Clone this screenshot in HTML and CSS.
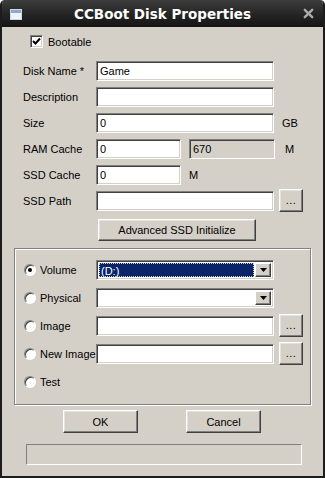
FILE: index.html
```html
<!DOCTYPE html>
<html>
<head>
<meta charset="utf-8">
<link rel="stylesheet" href="styles.css">
</head>
<body>
<div class="window">
  <div class="titlebar">
    <svg class="app-icon" width="12" height="11" viewBox="0 0 12 11"><rect x="0.5" y="0.5" width="11" height="10" fill="#eef3f9" stroke="#c9d6e6"/><rect x="1" y="1" width="10" height="3" fill="#8ea9c9"/></svg>
    <div class="title">CCBoot Disk Properties</div>
    <svg class="close" width="11" height="11" viewBox="0 0 11 11"><path d="M1.8 1.8 L9.2 9.2 M9.2 1.8 L1.8 9.2" stroke="#a9a9a9" stroke-width="2.4" stroke-linecap="round"/></svg>
  </div>
  <div class="client">
    <div class="check-row">
      <span class="checkbox"><svg width="9" height="9" viewBox="0 0 9 9"><path d="M1 4 L3.5 6.5 L8 1.5" fill="none" stroke="#000" stroke-width="2"/></svg></span>
      <span>Bootable</span>
    </div>
    <div class="fields">
      <div class="row"><span class="lbl">Disk Name *</span><div class="edit wide">Game</div></div>
      <div class="row"><span class="lbl">Description</span><div class="edit wide"></div></div>
      <div class="row"><span class="lbl">Size</span><div class="edit wide">0</div><span class="unit">GB</span></div>
      <div class="row"><span class="lbl">RAM Cache</span><div class="edit short">0</div><div class="edit disabled">670</div><span class="unit unit-m">M</span></div>
      <div class="row"><span class="lbl">SSD Cache</span><div class="edit short">0</div><span class="unit">M</span></div>
      <div class="row"><span class="lbl">SSD Path</span><div class="edit wide"></div><div class="btn browse">...</div></div>
    </div>
    <div class="adv-row"><div class="btn adv">Advanced SSD Initialize</div></div>
    <div class="group">
      <div class="grow"><span class="radio checked"></span><span class="rlbl">Volume</span>
        <div class="combo"><div class="combo-val"><span class="sel">(D:)</span></div><div class="drop"><svg width="7" height="4" viewBox="0 0 7 4"><path d="M0 0 H7 L3.5 4 Z" fill="#000"/></svg></div></div>
      </div>
      <div class="grow"><span class="radio"></span><span class="rlbl">Physical</span>
        <div class="combo"><div class="combo-val white"></div><div class="drop"><svg width="7" height="4" viewBox="0 0 7 4"><path d="M0 0 H7 L3.5 4 Z" fill="#000"/></svg></div></div>
      </div>
      <div class="grow"><span class="radio"></span><span class="rlbl">Image</span><div class="edit wide"></div><div class="btn browse">...</div></div>
      <div class="grow"><span class="radio"></span><span class="rlbl">New Image</span><div class="edit wide"></div><div class="btn browse">...</div></div>
      <div class="grow"><span class="radio"></span><span class="rlbl">Test</span></div>
    </div>
    <div class="buttons">
      <div class="btn action">OK</div>
      <div class="btn action">Cancel</div>
    </div>
    <div class="status"></div>
  </div>
</div>
</body>
</html>
```

FILE: styles.css
```css
html, body {
  margin: 0;
  padding: 0;
  background: #ffffff;
}
body {
  font-family: "Liberation Sans", Arial, sans-serif;
  font-size: 11px;
  color: #000;
}
.window {
  width: 325px;
  height: 478px;
  box-sizing: border-box;
  display: flex;
  flex-direction: column;
  background: #d4d0c8;
  border: 2px solid #1c1c1c;
  border-top: none;
  border-radius: 5px 5px 0 0;
  overflow: hidden;
}
.titlebar {
  height: 27px;
  flex: none;
  display: flex;
  align-items: center;
  padding: 0 9px 0 8px;
  background: linear-gradient(#3d3d3d, #262626 50%, #141414);
}
.app-icon { flex: none; margin-top: 1px; }
.title {
  flex: 1;
  text-align: center;
  color: #fff;
  font-family: "DejaVu Sans", sans-serif;
  font-weight: bold;
  font-size: 13.5px;
}
.close { flex: none; }
.client {
  flex: 1;
  display: flex;
  flex-direction: column;
  padding: 8px 11px 0 12px;
}
.check-row {
  display: flex;
  align-items: center;
  height: 13px;
  padding-left: 16px;
  gap: 5px;
}
.checkbox {
  width: 13px;
  height: 13px;
  box-sizing: border-box;
  background: #fff;
  border: 1px solid;
  border-color: #808080 #fff #fff #808080;
  box-shadow: inset 1px 1px 0 #404040, inset -1px -1px 0 #d4d0c8;
  display: flex;
  align-items: center;
  justify-content: center;
}
.fields {
  margin-top: 13px;
  display: flex;
  flex-direction: column;
  gap: 6px;
}
.row {
  display: flex;
  align-items: center;
  height: 20px;
  padding-left: 9px;
}
.lbl {
  width: 73px;
  flex: none;
}
.edit {
  height: 20px;
  box-sizing: border-box;
  background: #fff;
  border: 1px solid;
  border-color: #808080 #fff #fff #808080;
  box-shadow: inset 1px 1px 0 #404040, inset -1px -1px 0 #d4d0c8;
  padding: 0 3px;
  display: flex;
  align-items: center;
  flex: none;
}
.wide { width: 178px; }
.short { width: 85px; }
.disabled {
  width: 86px;
  margin-left: 8px;
  background: #d4d0c8;
}
.unit { margin-left: 8px; }
.unit-m { margin-left: 10px; }
.btn {
  box-sizing: border-box;
  border: 1px solid;
  border-color: #fff #404040 #404040 #fff;
  box-shadow: inset -1px -1px 0 #808080, inset 1px 1px 0 #e4e2dc;
  background: #d4d0c8;
  display: flex;
  align-items: center;
  justify-content: center;
  flex: none;
}
.browse {
  width: 24px;
  height: 23px;
  margin-left: 5px;
  margin-top: -1px;
  padding-bottom: 1px;
  letter-spacing: 0.5px;
}
.adv-row {
  margin-top: 8px;
  padding-left: 84px;
  display: flex;
}
.adv {
  width: 158px;
  height: 22px;
}
.group {
  margin-top: 7px;
  height: 157px;
  box-sizing: border-box;
  border: 1px solid #808080;
  box-shadow: 1px 1px 0 #fff, inset 1px 1px 0 #fff;
  padding: 10px 0 0 8px;
  display: flex;
  flex-direction: column;
  gap: 6px;
  width: 297px;
}
.grow {
  display: flex;
  align-items: center;
  height: 22px;
  padding-left: 1px;
}
.radio {
  width: 12px;
  height: 12px;
  box-sizing: border-box;
  border-radius: 50%;
  background: #fff;
  border: 1px solid;
  border-color: #808080 #fff #fff #808080;
  box-shadow: inset 1px 1px 0 #404040;
  flex: none;
  display: flex;
  align-items: center;
  justify-content: center;
}
.radio.checked::after {
  content: "";
  width: 4px;
  height: 4px;
  border-radius: 50%;
  background: #000;
}
.rlbl {
  width: 56px;
  margin-left: 4px;
  flex: none;
  white-space: nowrap;
  overflow: hidden;
}
.combo {
  width: 178px;
  height: 20px;
  box-sizing: border-box;
  border: 1px solid;
  border-color: #808080 #fff #fff #808080;
  box-shadow: inset 1px 1px 0 #404040, inset -1px -1px 0 #d4d0c8;
  background: #fff;
  display: flex;
  padding: 2px;
  flex: none;
}
.combo-val {
  flex: 1;
  display: flex;
}
.combo-val.white { background: #fff; }
.sel {
  flex: 1;
  background: #0a246a;
  color: #fff;
  outline: 1px dotted #c8c8c8;
  outline-offset: -1px;
  padding: 1px 2px 0;
  margin-right: 1px;
  display: flex;
  align-items: center;
}
.drop {
  width: 16px;
  box-sizing: border-box;
  border: 1px solid;
  border-color: #fff #404040 #404040 #fff;
  box-shadow: inset -1px -1px 0 #808080;
  background: #d4d0c8;
  display: flex;
  align-items: center;
  justify-content: center;
}
.buttons {
  margin-top: 5px;
  display: flex;
  padding-left: 49px;
  gap: 48px;
}
.action {
  width: 75px;
  height: 23px;
}
.status {
  margin-top: 11px;
  margin-left: 12px;
  width: 276px;
  height: 21px;
  box-sizing: border-box;
  border: 1px solid;
  border-color: #808080 #fff #fff #808080;
}
```
